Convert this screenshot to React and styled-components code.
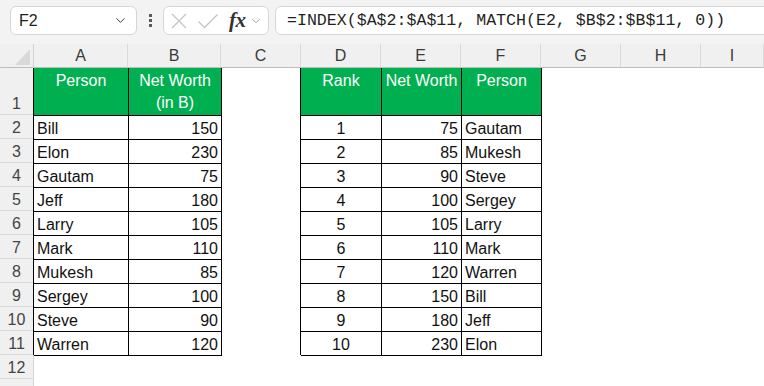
import React from 'react';
import styled, { createGlobalStyle } from 'styled-components';
import { ChevronDown } from 'lucide-react';

const GlobalStyle = createGlobalStyle`
    html, body {
        margin: 0;
        padding: 0;
        background: #FFFFFF;
        overflow: hidden;
        font-family: "Liberation Sans", Arial, sans-serif;
    }
`;

const Page = styled.div`
    width: 764px;
    height: 386px;
    overflow: hidden;
    background: #FFFFFF;
`;

const FormulaBar = styled.div`
    height: 44px;
    box-sizing: border-box;
    padding: 6px 0 0 10px;
    display: flex;
    align-items: flex-start;
    background: #F3F3F3;
`;

const Box = styled.div`
    height: 29px;
    box-sizing: border-box;
    background: #FFFFFF;
    border: 1px solid #D6D6D6;
    border-radius: 6px;
    display: flex;
    align-items: center;
`;

const NameBox = styled(Box)`
    width: 127px;
    padding: 0 8px 0 8px;
    justify-content: space-between;
    font-size: 16px;
    color: #1F1F1F;
`;

const Kebab = styled.div`
    width: 26px;
    height: 29px;
    display: flex;
    flex-direction: column;
    align-items: center;
    justify-content: center;
    gap: 2px;
    span {
        width: 3px;
        height: 3px;
        background: #5A5A5A;
    }
`;

const FxBox = styled(Box)`
    width: 106px;
    padding: 0 3px 0 6px;
    color: #C4C4C4;
`;

const Fx = styled.span`
    font-family: "Liberation Serif", "Times New Roman", serif;
    font-style: italic;
    font-weight: 700;
    font-size: 21px;
    color: #333333;
    margin: 0 3px 0 10px;
    letter-spacing: -0.5px;
`;

const FormulaInput = styled(Box)`
    flex: 1;
    margin-left: 6px;
    margin-right: -10px;
    padding-left: 11px;
    font-family: "Liberation Mono", "Courier New", monospace;
    font-size: 16.6px;
    color: #1F1F1F;
    white-space: pre;
`;

const Sheet = styled.div`
    display: grid;
    grid-template-columns: 34px 94px 93px 80px 80px 80px 80px 80px 80px 1fr;
    grid-template-rows: 24px 47px repeat(12, 24px);
`;

const Corner = styled.div`
    position: relative;
    background: #F0F0F0;
    border-right: 1px solid #D4D4D4;
    border-bottom: 1px solid #BDBDBD;
    &::after {
        content: '';
        position: absolute;
        right: 3px;
        bottom: 2px;
        width: 0;
        height: 0;
        border-left: 15px solid transparent;
        border-bottom: 16px solid #D9D9D9;
    }
`;

const ColHead = styled.div`
    display: flex;
    align-items: center;
    justify-content: center;
    background: #F0F0F0;
    border-right: 1px solid #D9D9D9;
    border-bottom: 1px solid #BDBDBD;
    font-size: 16px;
    color: #3B3B3B;
`;

const RowHead = styled.div`
    display: flex;
    align-items: flex-end;
    justify-content: center;
    background: #F0F0F0;
    border-right: 1px solid #D4D4D4;
    border-bottom: 1px solid #DCDCDC;
    font-size: 16px;
    line-height: 20px;
    color: #444444;
`;

const shadowFor = (p) => {
    const s = [];
    if (p.$first) s.push('-1px 0 0 #000');
    if (p.$last) s.push('1px 0 0 #000');
    if (p.$bottom) s.push('0 1px 0 #000');
    if (p.$last && p.$bottom) s.push('1px 1px 0 #000');
    return s.length ? s.join(', ') : 'none';
};

const Cell = styled.div`
    display: flex;
    align-items: ${p => (p.$head ? 'flex-start' : 'flex-end')};
    justify-content: ${p => p.$align || 'flex-start'};
    text-align: ${p => (p.$align === 'center' ? 'center' : 'left')};
    padding: ${p => (p.$head ? '2px 3px 0' : '0 3px 0 3px')};
    background: ${p => (p.$head ? '#00B050' : 'transparent')};
    color: ${p => (p.$head ? '#FFFFFF' : '#111111')};
    font-size: 16px;
    line-height: ${p => (p.$head ? '22px' : '20px')};
    white-space: pre-line;
    border-left: ${p => (p.$table && !p.$first ? '1px solid #000' : 'none')};
    border-top: ${p => (p.$table && !p.$head ? '1px solid #000' : 'none')};
    box-shadow: ${shadowFor};
    min-width: 0;
`;

const CancelIcon = () => (
    <svg width="18" height="18" viewBox="0 0 18 18" fill="none" stroke="currentColor" strokeWidth="1.3">
        <path d="M2 2 L16 16 M16 2 L2 16" />
    </svg>
);

const EnterIcon = () => (
    <svg width="22" height="18" viewBox="0 0 22 18" fill="none" stroke="currentColor" strokeWidth="1.3" style={{ marginLeft: 9 }}>
        <path d="M1.5 9.5 L7.5 15.5 L20.5 2.5" />
    </svg>
);

const columns = ['A', 'B', 'C', 'D', 'E', 'F', 'G', 'H', 'I'];

const people = [
    ['Bill', 150], ['Elon', 230], ['Gautam', 75], ['Jeff', 180], ['Larry', 105],
    ['Mark', 110], ['Mukesh', 85], ['Sergey', 100], ['Steve', 90], ['Warren', 120],
];

const ranked = [
    [1, 75, 'Gautam'], [2, 85, 'Mukesh'], [3, 90, 'Steve'], [4, 100, 'Sergey'], [5, 105, 'Larry'],
    [6, 110, 'Mark'], [7, 120, 'Warren'], [8, 150, 'Bill'], [9, 180, 'Jeff'], [10, 230, 'Elon'],
];

// what sits in a given cell (row number, column letter)
const cellFor = (row, col) => {
    const inData = row >= 2 && row <= 11;
    const base = { $table: true, $bottom: row === 11 };
    if (row === 1) {
        const heads = { A: 'Person', B: 'Net Worth\n(in B)', D: 'Rank', E: 'Net Worth', F: 'Person' };
        if (!heads[col]) return null;
        return { ...base, text: heads[col], $head: true, $align: 'center', $first: col === 'A' || col === 'D', $last: col === 'B' || col === 'F' };
    }
    if (!inData) return null;
    const i = row - 2;
    switch (col) {
        case 'A': return { ...base, text: people[i][0], $first: true };
        case 'B': return { ...base, text: people[i][1], $align: 'flex-end', $last: true };
        case 'D': return { ...base, text: ranked[i][0], $align: 'center', $first: true };
        case 'E': return { ...base, text: ranked[i][1], $align: 'flex-end' };
        case 'F': return { ...base, text: ranked[i][2], $last: true };
        default: return null;
    }
};

const App = () => {
    const rows = Array.from({ length: 13 }, (_, i) => i + 1);
    return (
        <Page>
            <GlobalStyle />
            <FormulaBar>
                <NameBox>
                    <span>F2</span>
                    <ChevronDown size={15} strokeWidth={1.6} color="#3A3A3A" />
                </NameBox>
                <Kebab><span /><span /><span /></Kebab>
                <FxBox>
                    <CancelIcon />
                    <EnterIcon />
                    <Fx>fx</Fx>
                    <ChevronDown size={14} strokeWidth={1.4} color="#8A8A8A" />
                </FxBox>
                <FormulaInput>=INDEX($A$2:$A$11, MATCH(E2, $B$2:$B$11, 0))</FormulaInput>
            </FormulaBar>
            <Sheet>
                <Corner />
                {columns.map(c => <ColHead key={c}>{c}</ColHead>)}
                {rows.map(r => (
                    <React.Fragment key={r}>
                        {/* row 13 sits below the window edge, only its strip shows */}
                        <RowHead>{r < 13 ? r : null}</RowHead>
                        {columns.map(c => {
                            const cell = cellFor(r, c);
                            if (!cell) return <Cell key={c} />;
                            const { text, ...props } = cell;
                            return <Cell key={c} {...props}>{text}</Cell>;
                        })}
                    </React.Fragment>
                ))}
            </Sheet>
        </Page>
    );
};

export default App;
